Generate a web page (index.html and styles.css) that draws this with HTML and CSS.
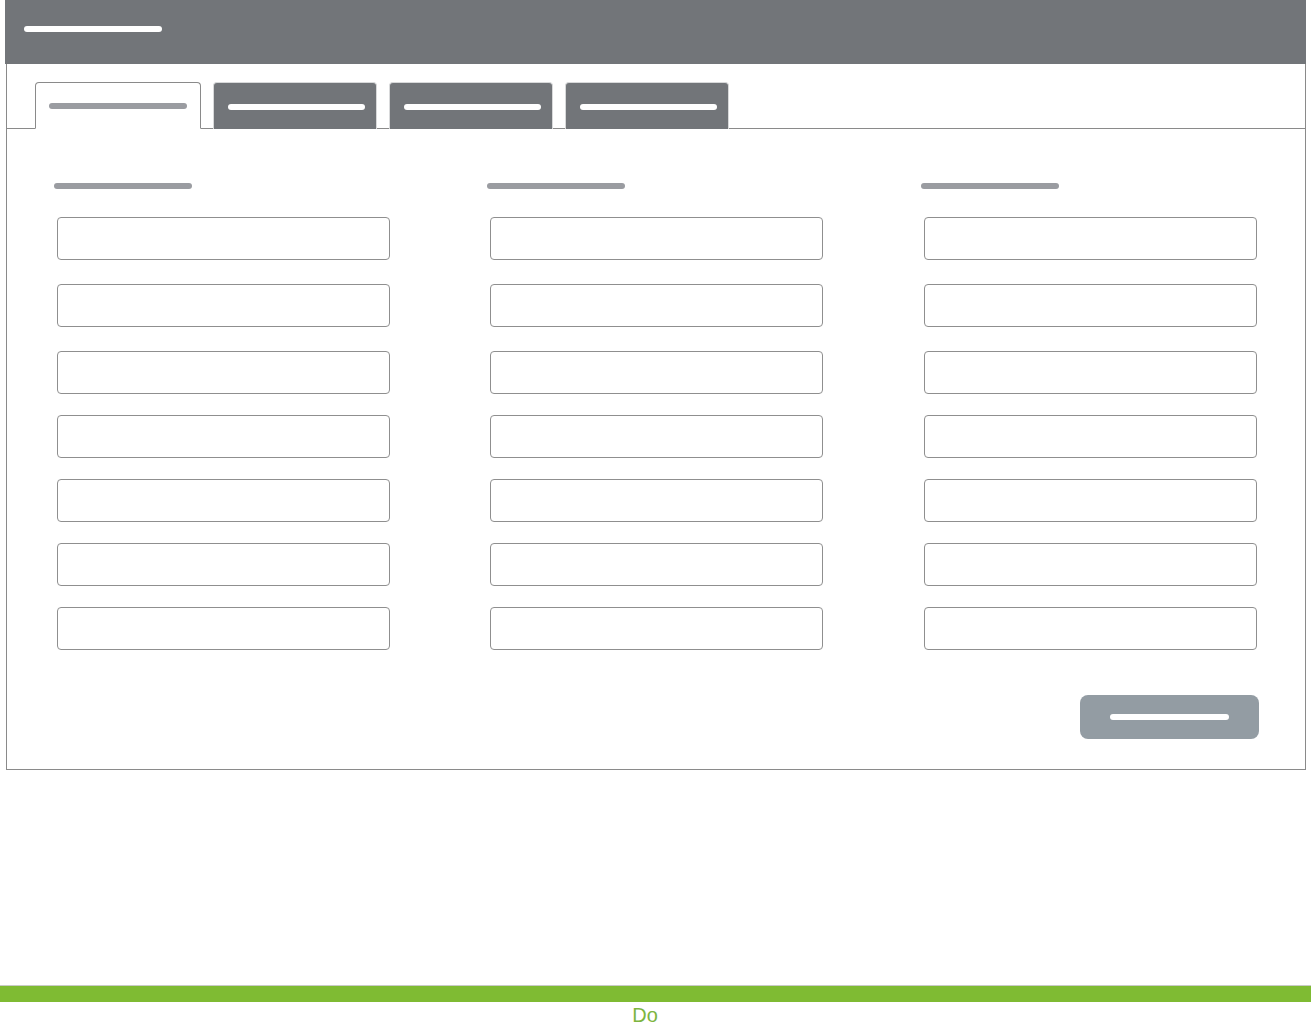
FILE: index.html
```
<!DOCTYPE html>
<html lang="en">
<head>
<meta charset="utf-8">
<title>Form wireframe</title>
<link rel="stylesheet" href="styles.css">
</head>
<body>
<div class="page">
  <div class="window">
    <header class="topbar"><span class="bar bar-white bar-title"></span></header>
    <div class="frame">
      <nav class="tabs">
        <div class="tab tab-active"><span class="bar bar-grey"></span></div>
        <div class="tab"><span class="bar bar-white"></span></div>
        <div class="tab"><span class="bar bar-white"></span></div>
        <div class="tab"><span class="bar bar-white"></span></div>
      </nav>
      <div class="content">
        <div class="columns">
          <section class="col">
            <span class="bar bar-grey label"></span>
            <div class="fields">
              <div class="field"></div><div class="field"></div><div class="field"></div><div class="field"></div><div class="field"></div><div class="field"></div><div class="field"></div>
            </div>
          </section>
          <section class="col">
            <span class="bar bar-grey label"></span>
            <div class="fields">
              <div class="field"></div><div class="field"></div><div class="field"></div><div class="field"></div><div class="field"></div><div class="field"></div><div class="field"></div>
            </div>
          </section>
          <section class="col">
            <span class="bar bar-grey label"></span>
            <div class="fields">
              <div class="field"></div><div class="field"></div><div class="field"></div><div class="field"></div><div class="field"></div><div class="field"></div><div class="field"></div>
            </div>
          </section>
        </div>
        <div class="actions">
          <div class="button"><span class="bar bar-white bar-btn"></span></div>
        </div>
      </div>
    </div>
  </div>
  <footer class="footer">
    <div class="green"></div>
    <div class="caption">Do</div>
  </footer>
</div>
</body>
</html>
```
FILE: styles.css
```
* { box-sizing: border-box; }
html, body { margin: 0; padding: 0; background: #fff; }
body { font-family: "Liberation Sans", Arial, sans-serif; }
.page { height: 1026px; padding-bottom: 2px; overflow: hidden; display: flex; flex-direction: column; }
.window { margin-left: 5px; width: 1301px; }
.topbar { height: 64px; background: #727579; padding: 26px 0 0 19px; }
.bar { display: block; height: 6px; border-radius: 3px; }
.bar-white { background: #fff; }
.bar-grey { background: #9a9ca1; }
.bar-title { width: 138px; }
.frame { margin-left: 1px; border: 1px solid #8a8a8a; border-top: none; }
.tabs { display: flex; gap: 12px; height: 65px; padding: 18px 0 0 28px; border-bottom: 1px solid #8a8a8a; }
.tab { width: 164px; height: 47px; margin-bottom: -1px; border-radius: 4px 4px 0 0; background: #727579; border: 1px solid #d8d9da; border-bottom: none; display: flex; align-items: center; padding: 1px 0 0 14px; }
.tab .bar { width: 137px; }
.tab-active { width: 166px; background: #fff; border: 1px solid #8a8a8a; border-bottom: 1px solid #fff; padding-left: 13px; }
.tab-active .bar { width: 138px; }
.content { padding: 54px 46px 30px 47px; }
.columns { display: grid; grid-template-columns: 433px 434px 1fr; }
.label { width: 138px; }
.fields { display: flex; flex-direction: column; gap: 21px; margin: 28px 0 0 3px; }
.field { width: 333px; height: 43px; border: 1px solid #8f8f8f; border-radius: 4px; }
.field:nth-child(1), .field:nth-child(2) { margin-bottom: 3px; }
.actions { display: flex; justify-content: flex-end; margin-top: 45px; }
.button { width: 179px; height: 44px; border-radius: 8px; background: #939ca3; display: flex; align-items: center; justify-content: center; }
.bar-btn { width: 119px; }
.footer { margin-top: auto; }
.green { height: 17px; background: #7fbb33; border-top: 1px solid #c9cbc6; }
.caption { height: 22px; text-align: center; color: #7db53f; font-size: 20px; line-height: 18px; padding: 4px 21px 0 0; }
```
